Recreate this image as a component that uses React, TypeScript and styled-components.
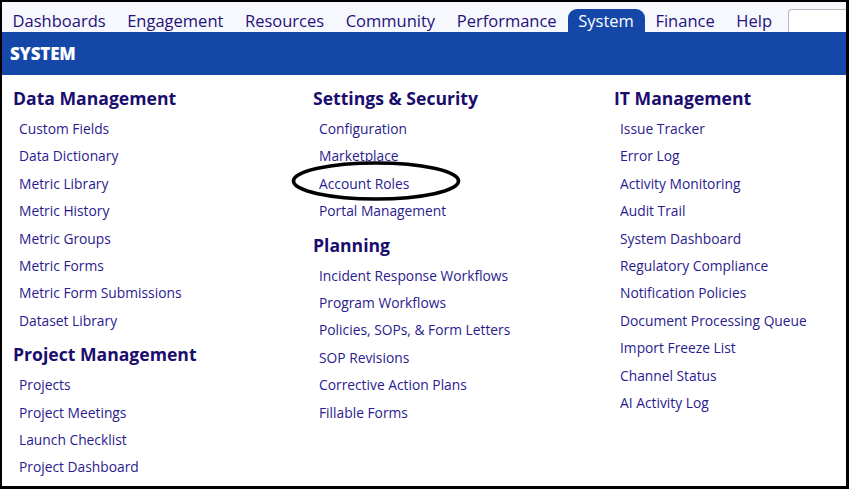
import styled, { createGlobalStyle } from 'styled-components';

const GlobalStyle = createGlobalStyle`
  html, body {
    margin: 0;
    padding: 0;
    background: #fff;
  }
  body {
    font-family: "Open Sans", "Noto Sans", sans-serif;
  }
  * {
    box-sizing: border-box;
  }
`;

const TABS = ['Dashboards', 'Engagement', 'Resources', 'Community', 'Performance', 'System', 'Finance', 'Help'];

type Section = { title: string; links: string[] };

const COLUMNS: Section[][] = [
  [
    {
      title: 'Data Management',
      links: [
        'Custom Fields',
        'Data Dictionary',
        'Metric Library',
        'Metric History',
        'Metric Groups',
        'Metric Forms',
        'Metric Form Submissions',
        'Dataset Library',
      ],
    },
    {
      title: 'Project Management',
      links: ['Projects', 'Project Meetings', 'Launch Checklist', 'Project Dashboard'],
    },
  ],
  [
    {
      title: 'Settings & Security',
      links: ['Configuration', 'Marketplace', 'Account Roles', 'Portal Management'],
    },
    {
      title: 'Planning',
      links: [
        'Incident Response Workflows',
        'Program Workflows',
        'Policies, SOPs, & Form Letters',
        'SOP Revisions',
        'Corrective Action Plans',
        'Fillable Forms',
      ],
    },
  ],
  [
    {
      title: 'IT Management',
      links: [
        'Issue Tracker',
        'Error Log',
        'Activity Monitoring',
        'Audit Trail',
        'System Dashboard',
        'Regulatory Compliance',
        'Notification Policies',
        'Document Processing Queue',
        'Import Freeze List',
        'Channel Status',
        'AI Activity Log',
      ],
    },
  ],
];

export default function App() {
  return (
    <>
      <GlobalStyle />
      <Frame>
        <NavBar>
          {TABS.map((t) => (
            <Tab key={t} $active={t === 'System'}>
              {t}
            </Tab>
          ))}
          <Search type="text" />
        </NavBar>
        <Banner>SYSTEM</Banner>
        <Content>
          {COLUMNS.map((col, i) => (
            <Column key={i}>
              {col.map((s) => (
                <Group key={s.title}>
                  <Heading>{s.title}</Heading>
                  <LinkList>
                    {s.links.map((l) => (
                      <MenuLink key={l} href="#">
                        {l}
                      </MenuLink>
                    ))}
                  </LinkList>
                </Group>
              ))}
            </Column>
          ))}
          {/* hand-drawn ring around one of the links */}
          <Circle viewBox="0 0 170 40">
            <ellipse cx="85" cy="20" rx="82.5" ry="18" fill="none" stroke="#000" strokeWidth="3.6" />
          </Circle>
        </Content>
      </Frame>
    </>
  );
}

const Frame = styled.div`
  width: 849px;
  height: 489px;
  border-style: solid;
  border-color: #000;
  border-width: 2px 3px 3px 2px;
  background: #fff;
  overflow: hidden;
  display: flex;
  flex-direction: column;
`;

const NavBar = styled.div`
  height: 30px;
  background: #f7f8fe;
  display: flex;
  align-items: flex-end;
`;

const Tab = styled.div<{ $active?: boolean }>`
  height: 23px;
  padding: 0 11px 0 10.6px;
  font-size: 16.5px;
  line-height: 23px;
  color: ${(p) => (p.$active ? '#fff' : '#24117a')};
  background: ${(p) => (p.$active ? '#1547a8' : 'transparent')};
  border-radius: ${(p) => (p.$active ? '9px 9px 0 0' : '0')};
  white-space: nowrap;
`;

const Search = styled.input`
  margin-left: 5px;
  flex: 1;
  height: 23px;
  border: 1px solid #b8b8c0;
  border-bottom: none;
  border-right: none;
  border-radius: 4px 0 0 0;
  background: #fff;
  outline: none;
  padding: 0;
`;

const Banner = styled.div`
  height: 43px;
  background: #1547a8;
  color: #fff;
  font-weight: 800;
  font-size: 17px;
  letter-spacing: -0.2px;
  padding-left: 8px;
  display: flex;
  align-items: center;
`;

const Content = styled.div`
  position: relative;
  display: grid;
  grid-template-columns: 300px 301px 1fr;
  padding: 10px 0 0 11px;
`;

const Column = styled.div`
  display: flex;
  flex-direction: column;
  gap: 7px;
`;

const Group = styled.div`
  display: flex;
  flex-direction: column;
`;

const Heading = styled.h2`
  margin: 0;
  font-size: 17.6px;
  font-weight: 700;
  line-height: 26px;
  color: #1a0d6e;
`;

const LinkList = styled.div`
  display: flex;
  flex-direction: column;
  padding-left: 6px;
  padding-top: 4px;
`;

const MenuLink = styled.a`
  font-size: 13.8px;
  line-height: 27.4px;
  color: #2a1b8e;
  text-decoration: none;
  white-space: nowrap;
`;

const Circle = styled.svg`
  position: absolute;
  left: 289px;
  top: 86px;
  width: 170px;
  height: 40px;
  overflow: visible;
`;
